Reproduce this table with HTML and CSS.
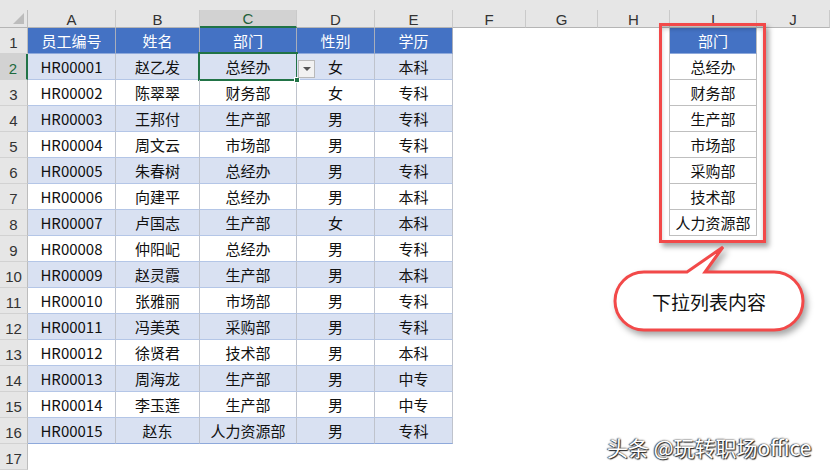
FILE: index.html
```html
<!DOCTYPE html>
<html lang="zh">
<head>
<meta charset="utf-8">
<link rel="stylesheet" href="styles.css">
</head>
<body>
<div class="top"></div>
<div class="sheet">
  <div class="c corner"><span class="tri"></span></div>
  <div class="c ch">A</div><div class="c ch">B</div><div class="c ch selh">C</div><div class="c ch">D</div><div class="c ch">E</div><div class="c ch">F</div><div class="c ch">G</div><div class="c ch">H</div><div class="c ch">I</div><div class="c ch">J</div>

  <div class="c rh">1</div>
  <div class="c th">员工编号</div><div class="c th">姓名</div><div class="c th">部门</div><div class="c th">性别</div><div class="c th">学历</div><div class="c"></div><div class="c"></div><div class="c"></div><div class="c th lh">部门</div><div class="c"></div>

  <div class="c rh selr">2</div>
  <div class="c tb band">HR00001</div><div class="c tb band">赵乙发</div><div class="c tb band active">总经办<span class="selbox"></span><span class="handle"></span><span class="dd"><span class="arrow"></span></span></div><div class="c tb band">女</div><div class="c tb band">本科</div><div class="c"></div><div class="c"></div><div class="c"></div><div class="c lst">总经办</div><div class="c"></div>

  <div class="c rh">3</div>
  <div class="c tb">HR00002</div><div class="c tb">陈翠翠</div><div class="c tb">财务部</div><div class="c tb">女</div><div class="c tb">专科</div><div class="c"></div><div class="c"></div><div class="c"></div><div class="c lst">财务部</div><div class="c"></div>

  <div class="c rh">4</div>
  <div class="c tb band">HR00003</div><div class="c tb band">王邦付</div><div class="c tb band">生产部</div><div class="c tb band">男</div><div class="c tb band">专科</div><div class="c"></div><div class="c"></div><div class="c"></div><div class="c lst">生产部</div><div class="c"></div>

  <div class="c rh">5</div>
  <div class="c tb">HR00004</div><div class="c tb">周文云</div><div class="c tb">市场部</div><div class="c tb">男</div><div class="c tb">专科</div><div class="c"></div><div class="c"></div><div class="c"></div><div class="c lst">市场部</div><div class="c"></div>

  <div class="c rh">6</div>
  <div class="c tb band">HR00005</div><div class="c tb band">朱春树</div><div class="c tb band">总经办</div><div class="c tb band">男</div><div class="c tb band">专科</div><div class="c"></div><div class="c"></div><div class="c"></div><div class="c lst">采购部</div><div class="c"></div>

  <div class="c rh">7</div>
  <div class="c tb">HR00006</div><div class="c tb">向建平</div><div class="c tb">总经办</div><div class="c tb">男</div><div class="c tb">本科</div><div class="c"></div><div class="c"></div><div class="c"></div><div class="c lst">技术部</div><div class="c"></div>

  <div class="c rh">8</div>
  <div class="c tb band">HR00007</div><div class="c tb band">卢国志</div><div class="c tb band">生产部</div><div class="c tb band">女</div><div class="c tb band">本科</div><div class="c"></div><div class="c"></div><div class="c"></div><div class="c lst">人力资源部</div><div class="c"></div>

  <div class="c rh">9</div>
  <div class="c tb">HR00008</div><div class="c tb">仲阳屺</div><div class="c tb">总经办</div><div class="c tb">男</div><div class="c tb">专科</div><div class="c"></div><div class="c"></div><div class="c"></div><div class="c"></div><div class="c"></div>

  <div class="c rh">10</div>
  <div class="c tb band">HR00009</div><div class="c tb band">赵灵霞</div><div class="c tb band">生产部</div><div class="c tb band">男</div><div class="c tb band">本科</div><div class="c"></div><div class="c"></div><div class="c"></div><div class="c"></div><div class="c"></div>

  <div class="c rh">11</div>
  <div class="c tb">HR00010</div><div class="c tb">张雅丽</div><div class="c tb">市场部</div><div class="c tb">男</div><div class="c tb">专科</div><div class="c"></div><div class="c"></div><div class="c"></div><div class="c"></div><div class="c"></div>

  <div class="c rh">12</div>
  <div class="c tb band">HR00011</div><div class="c tb band">冯美英</div><div class="c tb band">采购部</div><div class="c tb band">男</div><div class="c tb band">专科</div><div class="c"></div><div class="c"></div><div class="c"></div><div class="c"></div><div class="c"></div>

  <div class="c rh">13</div>
  <div class="c tb">HR00012</div><div class="c tb">徐贤君</div><div class="c tb">技术部</div><div class="c tb">男</div><div class="c tb">本科</div><div class="c"></div><div class="c"></div><div class="c"></div><div class="c"></div><div class="c"></div>

  <div class="c rh">14</div>
  <div class="c tb band">HR00013</div><div class="c tb band">周海龙</div><div class="c tb band">生产部</div><div class="c tb band">男</div><div class="c tb band">中专</div><div class="c"></div><div class="c"></div><div class="c"></div><div class="c"></div><div class="c"></div>

  <div class="c rh">15</div>
  <div class="c tb">HR00014</div><div class="c tb">李玉莲</div><div class="c tb">生产部</div><div class="c tb">男</div><div class="c tb">中专</div><div class="c"></div><div class="c"></div><div class="c"></div><div class="c"></div><div class="c"></div>

  <div class="c rh">16</div>
  <div class="c tb band last">HR00015</div><div class="c tb band last">赵东</div><div class="c tb band last">人力资源部</div><div class="c tb band last">男</div><div class="c tb band last">专科</div><div class="c"></div><div class="c"></div><div class="c"></div><div class="c"></div><div class="c"></div>

  <div class="c rh">17</div>
  <div class="c"></div><div class="c"></div><div class="c"></div><div class="c"></div><div class="c"></div><div class="c"></div><div class="c"></div><div class="c"></div><div class="c"></div><div class="c"></div>
</div>

<div class="redbox"></div>

<div class="callout">
  <svg class="bubble" width="200" height="95" viewBox="0 0 200 95">
    <path d="M34 29 H77 L113 4 L95 29 H164 A29 29 0 0 1 164 87 H34 A29 29 0 0 1 34 29 Z" fill="#fff" stroke="#f24949" stroke-width="3" stroke-linejoin="miter"/>
  </svg>
  <span class="callout-text">下拉列表内容</span>
</div>

<div class="watermark">头条 @玩转职场office</div>
</body>
</html>
```

FILE: styles.css
```css
* {
  box-sizing: border-box;
  margin: 0;
  padding: 0;
}

body {
  width: 830px;
  height: 472px;
  overflow: hidden;
  background: #fff;
  position: relative;
  font-family: "Noto Sans CJK SC", "Liberation Sans", sans-serif;
  font-size: 14px;
  color: #111;
}

.top {
  height: 10px;
  background: #e6e6e6;
}

.sheet {
  display: grid;
  grid-template-columns: 28px 88px 84px 97px 78px 78px 73px 72px 72px 87px 1fr;
  grid-template-rows: 18px repeat(17, 26px);
  height: 462px;
  overflow: hidden;
}

.c {
  border-right: 1px solid transparent;
  border-bottom: 1px solid transparent;
  display: flex;
  align-items: center;
  justify-content: center;
  white-space: nowrap;
  line-height: 1;
  position: relative;
}

.corner {
  background: #e6e6e6;
  border-right: 1px solid #bdbdbd;
  border-bottom: 1px solid #b5b5b5;
  align-items: flex-end;
  justify-content: flex-end;
  padding: 0 3px 3px 0;
}

.tri {
  width: 11px;
  height: 11px;
  background: #bcbcbc;
  clip-path: polygon(100% 0, 100% 100%, 0 100%);
}

.ch {
  background: #e6e6e6;
  border-right: 1px solid #cacaca;
  border-bottom: 1px solid #b5b5b5;
  color: #333;
  font-family: "Liberation Sans", sans-serif;
  font-size: 15px;
  padding-top: 1px;
}

.selh {
  background: #d2d2d2;
  color: #1f5f3a;
  border-bottom: 2px solid #217346;
}

.rh {
  background: #e6e6e6;
  border-right: 1px solid #bdbdbd;
  border-bottom: 1px solid #d2d2d2;
  color: #333;
  font-family: "Liberation Sans", sans-serif;
  font-size: 15px;
  align-items: flex-end;
  padding-bottom: 3px;
}

.selr {
  background: #d2d2d2;
  color: #1f6a3e;
  border-right: 2px solid #217346;
}

.th {
  background: #4472c4;
  color: #fff;
  border-right: 1px solid #a9aebb;
  border-bottom: 1px solid #8ea9db;
  font-size: 15px;
}

.tb {
  border-right: 1px solid #bfc3cc;
  border-bottom: 1px solid #b4c6e7;
  font-size: 15px;
}

.band {
  background: #d9e1f2;
}

.last {
  border-bottom: 1px solid #8ea9db;
}

.lh {
  border-right: 1px solid #bfbfbf;
  box-shadow: -1px 0 0 #bfbfbf;
}

.lst {
  border-right: 1px solid #bfbfbf;
  border-bottom: 1px solid #bfbfbf;
  box-shadow: -1px 0 0 #bfbfbf;
  font-size: 15px;
}

.selbox {
  position: absolute;
  left: -2px;
  top: -2px;
  right: -2px;
  bottom: -2px;
  border: 2px solid #217346;
}

.handle {
  position: absolute;
  right: -4px;
  bottom: -4px;
  width: 6px;
  height: 6px;
  background: #217346;
  border: 1px solid #fff;
  z-index: 2;
}

.dd {
  position: absolute;
  left: 98px;
  top: 6px;
  width: 17px;
  height: 18px;
  background: #f2f2f2;
  border: 1px solid #b9b9b9;
  display: flex;
  align-items: center;
  justify-content: center;
  z-index: 2;
}

.arrow {
  width: 0;
  height: 0;
  border-left: 4px solid transparent;
  border-right: 4px solid transparent;
  border-top: 4px solid #555;
}

.redbox {
  position: absolute;
  left: 659px;
  top: 23px;
  width: 107px;
  height: 220px;
  border: 3px solid #f24949;
  box-shadow: 3px 4px 5px rgba(0, 0, 0, 0.35), inset 0 3px 4px rgba(0, 0, 0, 0.2);
}

.callout {
  position: absolute;
  left: 610px;
  top: 243px;
  width: 200px;
  height: 95px;
}

.bubble {
  display: block;
  filter: drop-shadow(3px 4px 3px rgba(0, 0, 0, 0.35));
}

.callout-text {
  position: absolute;
  left: 5px;
  top: 29px;
  width: 188px;
  height: 58px;
  display: flex;
  align-items: center;
  justify-content: center;
  font-size: 19px;
  color: #111;
}

.watermark {
  position: absolute;
  left: 607px;
  top: 435px;
  font-family: "Noto Sans CJK SC", "Liberation Sans", sans-serif;
  font-size: 21px;
  line-height: 24px;
  color: #fff;
  text-shadow: 1px 1px 1px #222, -1px 0 1px #444, 0 0 2px #333;
  white-space: nowrap;
}
```
